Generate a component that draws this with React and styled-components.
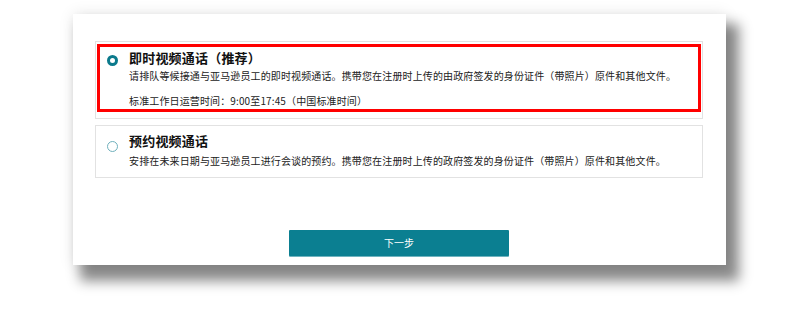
import React from "react";
import styled, { createGlobalStyle } from "styled-components";

const GlobalStyle = createGlobalStyle`
  html, body { margin: 0; padding: 0; background: #ffffff; }
  body { font-family: "Noto Sans CJK SC", "Noto Sans", sans-serif; color: #111111; }
  * { box-sizing: border-box; }
`;

const Page = styled.div`
  width: 809px;
  height: 311px;
  padding: 14px 0 0 73px;
  overflow: hidden;
`;

const Card = styled.div`
  width: 653px;
  height: 251px;
  background: #ffffff;
  padding: 27px 23px 9px 22px;
  display: flex;
  flex-direction: column;
  box-shadow: 10px 13px 12px 3px rgba(0, 0, 0, 0.46), 0 0 14px rgba(0, 0, 0, 0.1);
`;

const OptionList = styled.div`
  display: flex;
  flex-direction: column;
  gap: 6px;
`;

const Option = styled.div`
  border: 1px solid #e2e2e2;
  padding: ${(p) => (p.$highlight ? "2px 1px 6px 1px" : "0")};
`;

const Highlight = styled.div`
  border: 3px solid #ff0000;
`;

const OptionBody = styled.div`
  display: flex;
  align-items: flex-start;
  padding: ${(p) => p.$pad};
`;

const Radio = styled.span`
  flex: none;
  width: 11px;
  height: 11px;
  border-radius: 50%;
  margin: ${(p) => p.$m};
  border: ${(p) => (p.$checked ? "3px solid #0b7a8c" : "1.5px solid #6fb0bc")};
  background: #ffffff;
`;

const Texts = styled.div`
  display: flex;
  flex-direction: column;
`;

const Title = styled.div`
  font-size: 13px;
  line-height: 16px;
  font-weight: 700;
  color: #111111;
  letter-spacing: 0.2px;
`;

const Desc = styled.div`
  font-size: 10px;
  line-height: 14px;
  color: #222222;
  margin-top: ${(p) => p.$mt || "3px"};
  white-space: nowrap;
  letter-spacing: 0.13px;
`;

const Footer = styled.div`
  margin-top: auto;
  display: flex;
  justify-content: center;
`;

const NextButton = styled.button`
  width: 220px;
  height: 26px;
  border: none;
  border-radius: 1px;
  background: #0b7f91;
  color: #ffffff;
  font-family: "Noto Sans CJK SC", "Noto Sans", sans-serif;
  font-size: 10px;
  line-height: 26px;
  padding: 0;
  box-shadow: 0 1px 0 #6fb3bf;
`;

export default function App() {
  return (
    <>
      <GlobalStyle />
      <Page>
        <Card>
          <OptionList>
            <Option $highlight>
              <Highlight>
                <OptionBody $pad="3px 10px 1px 7px">
                  <Radio $checked $m="5px 11px 0 0" />
                  <Texts>
                    <Title>即时视频通话（推荐）</Title>
                    <Desc>
                      请排队等候接通与亚马逊员工的即时视频通话。携带您在注册时上传的由政府签发的身份证件（带照片）原件和其他文件。
                    </Desc>
                    <Desc $mt="11px">标准工作日运营时间：9:00至17:45（中国标准时间）</Desc>
                  </Texts>
                </OptionBody>
              </Highlight>
            </Option>
            <Option>
              <OptionBody $pad="7px 10px 9px 11px">
                <Radio $m="8px 11px 0 0" />
                <Texts>
                  <Title>预约视频通话</Title>
                  <Desc $mt="5px">
                    安排在未来日期与亚马逊员工进行会谈的预约。携带您在注册时上传的政府签发的身份证件（带照片）原件和其他文件。
                  </Desc>
                </Texts>
              </OptionBody>
            </Option>
          </OptionList>
          <Footer>
            <NextButton>下一步</NextButton>
          </Footer>
        </Card>
      </Page>
    </>
  );
}
